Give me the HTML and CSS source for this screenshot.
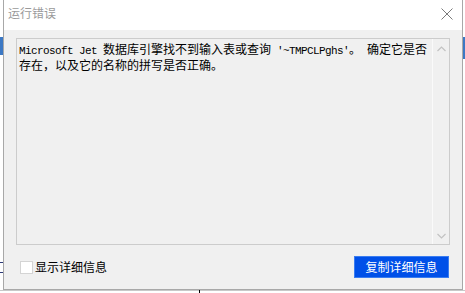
FILE: index.html
```html
<!DOCTYPE html>
<html>
<head>
<meta charset="utf-8">
<link rel="stylesheet" href="styles.css">
</head>
<body>
<div class="desktop">
  <div class="deco deco-left-blue"></div>
  <div class="deco deco-right-blue"></div>
  <div class="deco deco-bottom-line"></div>
  <div class="deco deco-tick"></div>
  <div class="deco deco-left-lines"></div>
  <div class="window">
    <div class="titlebar">
      <span class="title">运行错误</span>
      <svg class="close" width="12" height="12" viewBox="0 0 12 12"><path d="M0.5 0.5 L11.5 11.5 M11.5 0.5 L0.5 11.5" stroke="#7a7a7a" stroke-width="1" fill="none"/></svg>
    </div>
    <div class="body">
      <div class="textbox">
        <div class="text"><span class="lat">Microsoft Jet </span>数据库引擎找不到输入表或查询<span class="lat"> '~TMPCLPghs'</span>。<span class="lat"> </span>确定它是否<br>存在，以及它的名称的拼写是否正确。</div>
        <div class="scrollbar">
          <svg class="arrow" width="9" height="6" viewBox="0 0 9 6"><path d="M0.5 5 L4.5 1 L8.5 5" stroke="#c2c2c2" stroke-width="1.2" fill="none"/></svg>
          <svg class="arrow" width="9" height="6" viewBox="0 0 9 6"><path d="M0.5 1 L4.5 5 L8.5 1" stroke="#c2c2c2" stroke-width="1.2" fill="none"/></svg>
        </div>
      </div>
      <div class="footer">
        <label class="check"><span class="box"></span><span class="label">显示详细信息</span></label>
        <button class="copy">复制详细信息</button>
      </div>
    </div>
  </div>
</div>
</body>
</html>
```
FILE: styles.css
```css
html, body {
  margin: 0;
  padding: 0;
  background: #ffffff;
}
.desktop {
  position: relative;
  width: 465px;
  height: 293px;
  overflow: hidden;
  background: #ffffff;
  font-family: "Noto Sans CJK SC", "Noto Sans", sans-serif;
}
.deco {
  position: absolute;
}
.deco-left-blue {
  left: 0;
  top: 37px;
  width: 3px;
  height: 18px;
  background: #3c78c4;
}
.deco-left-lines {
  left: 0;
  top: 262px;
  width: 3px;
  height: 11px;
  border-top: 1px solid #2c3a78;
  border-bottom: 1px solid #2c3a78;
  box-sizing: border-box;
}
.deco-right-blue {
  right: 0;
  top: 37px;
  width: 3px;
  height: 22px;
  background: #3c78c4;
}
.deco-bottom-line {
  left: 0;
  top: 290px;
  width: 465px;
  height: 1px;
  background: #c8c8c8;
}
.deco-tick {
  left: 199px;
  top: 290px;
  width: 1px;
  height: 3px;
  background: #000;
}
.window {
  position: absolute;
  left: 3px;
  top: 0;
  width: 460px;
  height: 290px;
  box-sizing: border-box;
  border: 1px solid #a8a8a8;
  border-top: none;
  background: #f0f0f0;
  display: flex;
  flex-direction: column;
}
.titlebar {
  height: 30px;
  background: #ffffff;
  display: flex;
  align-items: flex-start;
  justify-content: space-between;
  padding: 5px 9px 0 4px;
  box-sizing: border-box;
  flex: none;
}
.title {
  font-size: 12px;
  line-height: 16px;
  color: #9a9a9a;
}
.close {
  margin-top: 3px;
  display: block;
}
.body {
  flex: 1;
  display: flex;
  flex-direction: column;
  padding: 8px 12px 0 12px;
}
.textbox {
  height: 207px;
  box-sizing: border-box;
  border: 1px solid #cccccc;
  background: #f0f0f0;
  display: flex;
}
.text {
  flex: 1;
  padding: 3px 0 0 2px;
  font-size: 12px;
  line-height: 13px;
  color: #000;
  white-space: nowrap;
  font-family: "Noto Sans CJK SC", sans-serif;
}
.lat {
  font-family: "Liberation Mono", monospace;
  font-size: 11px;
  letter-spacing: -0.6px;
  white-space: pre;
}
.scrollbar {
  width: 17px;
  box-sizing: border-box;
  border-left: 1px solid #fafafa;
  display: flex;
  flex-direction: column;
  justify-content: space-between;
  align-items: center;
  padding: 7px 0 5px 0;
}
.arrow {
  display: block;
}
.footer {
  display: flex;
  justify-content: space-between;
  align-items: flex-start;
  margin-top: 11px;
  padding-left: 4px;
  padding-right: 1px;
}
.check {
  display: flex;
  align-items: center;
  margin-top: 3px;
  gap: 2px;
}
.box {
  width: 13px;
  height: 13px;
  box-sizing: border-box;
  background: #ffffff;
  border: 1px solid #d4d4d4;
}
.label {
  font-size: 12px;
  line-height: 16px;
  color: #000;
}
.copy {
  width: 95px;
  height: 22px;
  box-sizing: border-box;
  margin: 0;
  padding: 0;
  border: 1px solid #3a7cf0;
  background: #0050e8;
  color: #ffffff;
  font-family: "Noto Sans CJK SC", sans-serif;
  font-size: 12px;
  line-height: 18px;
}
```
